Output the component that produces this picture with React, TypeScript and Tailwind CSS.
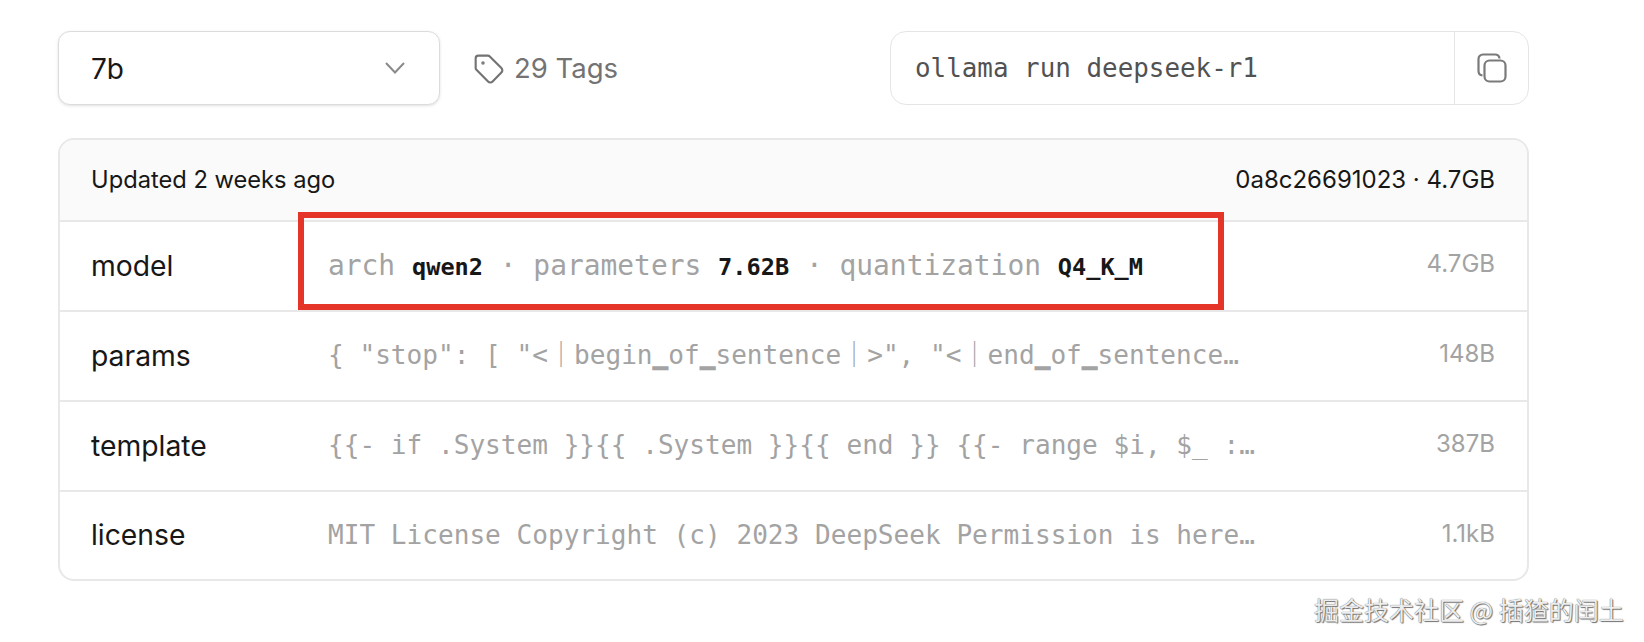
import { Tag } from "lucide-react";

type Row = {
  name: string;
  size: string;
  detail: React.ReactNode;
};

const Strong = ({ children }: { children: string }) => (
  <b className="font-bold text-[23.6px] text-[#171717]">{children}</b>
);

const rows: Row[] = [
  {
    name: "model",
    size: "4.7GB",
    detail: (
      <span className="text-[27.9px]">
        arch <Strong>qwen2</Strong> · parameters <Strong>7.62B</Strong> · quantization <Strong>Q4_K_M</Strong>
      </span>
    ),
  },
  {
    name: "params",
    size: "148B",
    detail: '{ "stop": [ "<｜begin▁of▁sentence｜>", "<｜end▁of▁sentence…',
  },
  {
    name: "template",
    size: "387B",
    detail: "{{- if .System }}{{ .System }}{{ end }} {{- range $i, $_ :…",
  },
  {
    name: "license",
    size: "1.1kB",
    detail: "MIT License Copyright (c) 2023 DeepSeek Permission is here…",
  },
];

export default function App() {
  return (
    <div className="relative w-[1644px] h-[642px] overflow-hidden bg-white pt-[31px] pl-[58px] font-['Inter',sans-serif] text-[#171717]">
      {/* Top controls */}
      <div className="flex items-center w-[1471px] h-[74px]">
        <div className="flex items-center justify-between w-[382px] h-full pl-[32px] pr-[34px] bg-white border border-[#dcdcdc] rounded-xl shadow-[0_1px_3px_rgba(0,0,0,0.12)]">
          <span className="mt-[2px] text-[28px]">7b</span>
          <svg width="20" height="12" viewBox="0 0 20 12" fill="none" stroke="#8a8a8a" strokeWidth="2">
            <path d="M1 1l9 9.5L19 1" />
          </svg>
        </div>
        <div className="flex items-center gap-[9px] ml-[33px] mt-[2px] text-[#737373]">
          <Tag size={32} strokeWidth={1.6} />
          <span className="text-[27.5px]">29 Tags</span>
        </div>
        <div className="flex items-center ml-auto w-[639px] h-full border border-[#e5e5e5] rounded-2xl">
          <span className="flex-1 pl-[24px] font-['DejaVu_Sans_Mono',monospace] text-[25.9px] text-[#525252]">
            ollama run deepseek-r1
          </span>
          <div className="flex items-center justify-center w-[74px] h-full border-l border-[#e5e5e5]">
            <svg width="30" height="30" viewBox="0 0 30 30" fill="none" stroke="#7a7a7a" strokeWidth="2.2">
              <rect x="7.5" y="7.5" width="21" height="21" rx="5" />
              <path d="M22.5 5.5A4.5 4.5 0 0 0 18 1.5H6A4.5 4.5 0 0 0 1.5 6v12a4.5 4.5 0 0 0 4 4.5" />
            </svg>
          </div>
        </div>
      </div>

      {/* Layers table */}
      <div className="w-[1471px] mt-[33px] border-2 border-[#e8e8e8] rounded-2xl overflow-hidden">
        <div className="flex items-center justify-between h-[82px] pl-[31px] pr-[32px] bg-[#fafafa] border-b-2 border-[#e8e8e8] text-[24px]">
          <span className="text-[23.7px]">Updated 2 weeks ago</span>
          <span>0a8c26691023 · 4.7GB</span>
        </div>
        {rows.map((row, i) => (
          <div
            key={row.name}
            className={`flex items-center pl-[31px] pr-[32px] ${i < rows.length - 1 ? "h-[90px] border-b-2 border-[#e8e8e8]" : "h-[87px]"}`}
          >
            <span className="w-[237px] shrink-0 text-[28.3px]">{row.name}</span>
            <span className="whitespace-nowrap font-['DejaVu_Sans_Mono','Noto_Sans_CJK_SC',monospace] text-[26.1px] text-[#a3a3a3]">
              {row.detail}
            </span>
            <span className="ml-auto mb-[4px] text-[24px] text-[#a3a3a3]">{row.size}</span>
          </div>
        ))}
      </div>

      {/* Red highlight drawn over the model row */}
      <div className="absolute left-[298px] top-[212px] w-[926px] h-[98px] border-[6px] border-[#e53529]" />

      {/* Watermark */}
      <div className="absolute left-[1314px] top-[591px] font-['Noto_Sans_CJK_SC',sans-serif] text-[25px] text-[#ededed] [text-shadow:0_0_1px_#444444,1px_1px_1px_#777777]">
        掘金技术社区 @ 插猹的闰土
      </div>
    </div>
  );
}
